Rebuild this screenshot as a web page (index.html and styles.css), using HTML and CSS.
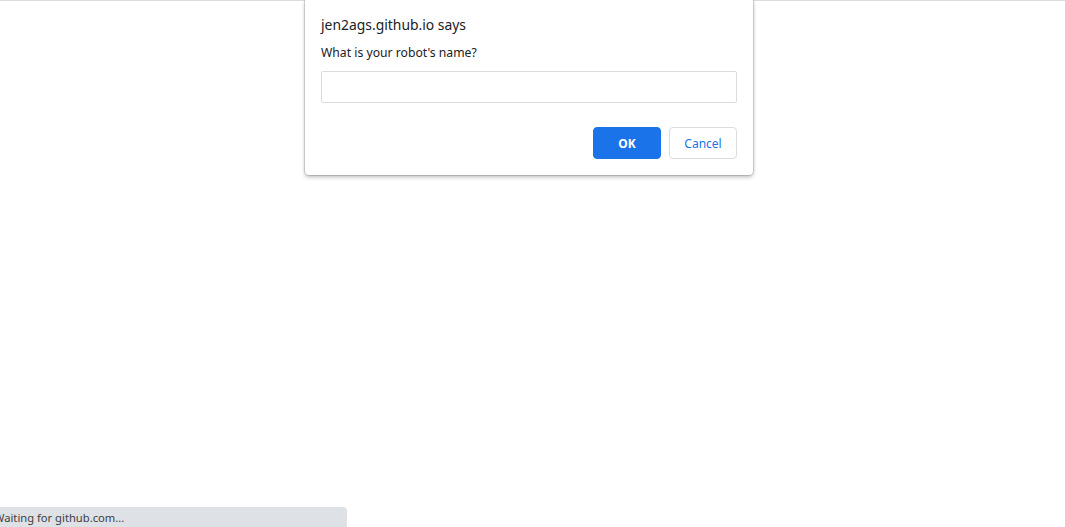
FILE: index.html
```html
<!DOCTYPE html>
<html>
<head>
<meta charset="utf-8">
<link rel="stylesheet" href="styles.css">
</head>
<body>
<div class="page"></div>
<div class="dialog">
  <div class="title">jen2ags.github.io says</div>
  <div class="message">What is your robot's name?</div>
  <input class="field" type="text">
  <div class="actions">
    <button class="btn btn-ok">OK</button>
    <button class="btn btn-cancel">Cancel</button>
  </div>
</div>
<div class="status">Waiting for github.com...</div>
</body>
</html>
```
FILE: styles.css
```css
html, body {
  margin: 0;
  padding: 0;
  width: 100%;
  height: 100%;
  background: #ffffff;
  overflow: hidden;
  font-family: "Noto Sans", "Open Sans", sans-serif;
}
.page {
  height: 100%;
  border-top: 1px solid #dadce0;
  box-sizing: border-box;
}
.dialog {
  position: absolute;
  left: 305px;
  top: 0;
  width: 448px;
  box-sizing: border-box;
  padding: 14px 16px 16px;
  background: #fff;
  border-radius: 0 0 4px 4px;
  box-shadow: 0 0 0 1px rgba(0,0,0,0.12), 0 2px 4px rgba(0,0,0,0.28);
}
.title {
  font-size: 13.9px;
  line-height: 22px;
  color: #202124;
}
.message {
  margin-top: 8px;
  font-size: 12.2px;
  line-height: 18px;
  color: #202124;
}
.field {
  display: block;
  margin-top: 9px;
  width: 100%;
  height: 32px;
  box-sizing: border-box;
  border: 1px solid #dadce0;
  border-radius: 2px;
  outline: none;
  padding: 0 8px;
  font: inherit;
}
.actions {
  display: flex;
  justify-content: flex-end;
  gap: 8px;
  margin-top: 24px;
}
.btn {
  width: 68px;
  height: 32px;
  box-sizing: border-box;
  border-radius: 4px;
  font-family: "Noto Sans", "Open Sans", sans-serif;
  font-size: 12px;
  cursor: pointer;
  padding: 0;
}
.btn-ok {
  background: #1a73e8;
  border: 1px solid #1a73e8;
  color: #fff;
  font-weight: 700;
}
.btn-cancel {
  background: #fff;
  border: 1px solid #dadce0;
  color: #1a73e8;
  font-weight: 400;
}
.status {
  position: absolute;
  left: 0;
  bottom: 0;
  width: 353px;
  margin-left: -6px;
  height: 20px;
  box-sizing: border-box;
  padding-left: 0;
  background: #dee1e6;
  border-top-right-radius: 4px;
  font-size: 11.2px;
  line-height: 21px;
  color: #3c4043;
  white-space: nowrap;
}
```
